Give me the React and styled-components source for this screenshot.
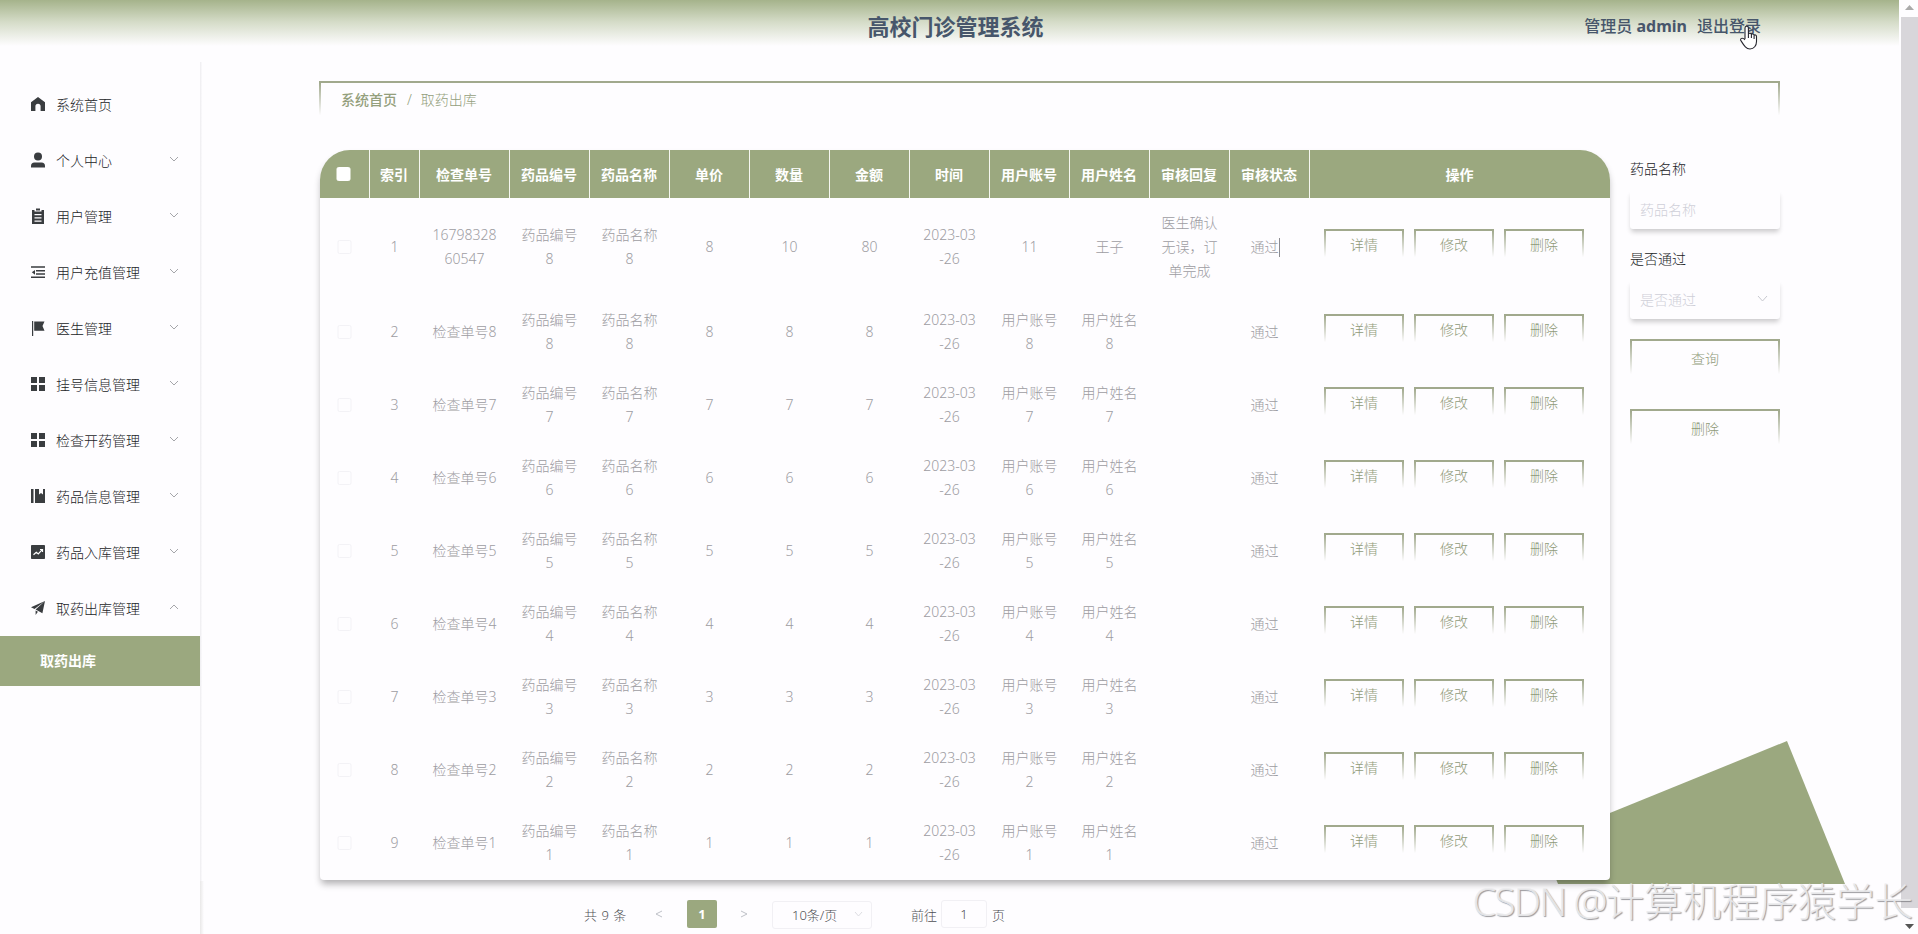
import React from 'react';
import styled, { createGlobalStyle, css } from 'styled-components';

const GREEN = '#9ba87f';
const PAGE = '#fefdff';

const GlobalStyle = createGlobalStyle`
  * {
    box-sizing: border-box;
  }
  html, body {
    margin: 0;
    height: 934px;
    overflow: hidden;
    background: ${PAGE};
  }
  body {
    font-family: 'Noto Sans', 'Noto Sans CJK SC', sans-serif;
    font-size: 14px;
    font-weight: 300;
    color: #222427;
  }
  button, input {
    font: inherit;
  }
`;

const fadingBorder = css`
  border: 2px solid ${GREEN};
  border-image: linear-gradient(to bottom, #a1a98d 5%, rgba(160, 171, 134, 0) 88%) 2;
`;

const Page = styled.div`
  position: relative;
  display: grid;
  grid-template-columns: 1fr 19px;
  width: 1918px;
  height: 934px;
  overflow: hidden;
`;

const Screen = styled.div`
  display: flex;
  flex-direction: column;
  min-width: 0;
`;

const Header = styled.header`
  display: grid;
  grid-template-columns: 1fr auto 1fr;
  align-items: center;
  height: 62px;
  padding: 0 138px 11px 150px;
  background: linear-gradient(to bottom, #a5b38b 0, #d5dcc8 22px, ${PAGE} 46px);
  color: #47566b;
  font-weight: 700;
`;

const Title = styled.h1`
  grid-column: 2;
  margin: 0;
  font-size: 22px;
  line-height: 30px;
`;

const Account = styled.div`
  display: flex;
  justify-content: flex-end;
  gap: 10px;
  font-size: 16px;
  font-weight: 500;
  line-height: 24px;
`;

const AccountName = styled.b`
  font-weight: 700;
`;

const Body = styled.div`
  display: flex;
  flex: 1;
  min-height: 0;
`;

const Sidebar = styled.nav`
  width: 200px;
  flex-shrink: 0;
  padding-top: 14px;
`;

const MenuItem = styled.div`
  display: flex;
  align-items: center;
  height: 56px;
  padding: 0 20px 0 31px;
`;

const MenuLabel = styled.span`
  flex: 1;
  margin-left: 11px;
`;

const MenuArrow = styled.svg`
  width: 10px;
  height: 6px;
  margin: 0 1px 3px 0;
  fill: none;
  stroke: #a5a6aa;
  transform: ${(props) => (props.$open ? 'rotate(180deg)' : 'none')};
`;

const SubItem = styled.div`
  height: 50px;
  padding-left: 40px;
  background: ${GREEN};
  color: #fff;
  font-weight: 700;
  line-height: 50px;
`;

// the menu shadow gets wider below the end of the scrolled content
const Divider = styled.div`
  display: flex;
  flex-direction: column;
  width: 4px;
  margin-right: -4px;

  &::before {
    content: '';
    height: 819px;
    background: linear-gradient(to right, #eeedf0, #f7f6f9 35%, ${PAGE} 60%);
  }
  &::after {
    content: '';
    flex: 1;
    background: linear-gradient(to right, #e9e8e8, ${PAGE});
  }
`;

const Main = styled.main`
  position: relative;
  flex: 1;
  padding: 19px 119px 0 119px;
`;

const Breadcrumb = styled.div`
  ${fadingBorder};
  display: flex;
  gap: 10px;
  height: 39px;
  padding: 0 20px 0 21px;
  color: #949f7c;
  line-height: 33px;
`;

const Crumb = styled.span`
  margin-left: -1px;
  font-weight: ${(props) => (props.$link ? 500 : 300)};
`;

const Decoration = styled.div`
  position: absolute;
  left: 1341px;
  top: 679px;
  width: 304px;
  height: 143px;
  background: ${GREEN};
  clip-path: polygon(246px 0, 304px 143px, 17px 143px, 0 100px);
`;

const Content = styled.div`
  position: relative;
  display: flex;
  align-items: flex-start;
  gap: 20px;
  padding: 30px 0 0 1px;
`;

const Card = styled.section`
  width: 1290px;
  height: 730px;
  border-radius: 30px 30px 4px 4px;
  background: ${PAGE};
  box-shadow: 0 5px 7px -1px rgba(0, 0, 0, 0.3);
  overflow: hidden;
`;

const Table = styled.table`
  width: 100%;
  border-collapse: separate;
  border-spacing: 0;
  table-layout: fixed;
`;

const HeadCell = styled.th`
  height: 48px;
  padding: 0 1px 1px 0;
  background: ${GREEN};
  border-right: 1px solid #f6f7f1;
  color: #fff;
  font-weight: 700;

  &:last-child {
    border-right: 0;
  }
`;

const Cell = styled.td`
  height: 73px;
  padding: 13px 11px 12px 10px;
  color: #9d9ca2;
  line-height: 24px;
  text-align: center;
  word-break: break-all;
  ${(props) =>
    props.$shifted &&
    css`
      padding-right: 21px;
      white-space: nowrap;
    `}
`;

const Checkbox = styled.span`
  display: block;
  width: 14px;
  height: 14px;
  margin: 0 auto;
  border: 1px solid ${(props) => (props.$head ? '#fff' : '#f3f2f6')};
  border-radius: 2px;
  background: ${(props) => (props.$head ? '#fff' : 'transparent')};
  transform: translateX(-0.5px);
`;

const Caret = styled.i`
  display: inline-block;
  width: 1px;
  height: 19px;
  margin-right: -1px;
  background: #8b8b90;
  vertical-align: -5px;
`;

const Actions = styled.div`
  display: flex;
  justify-content: center;
  gap: 10px;
  margin: -4px 0 0 -1px;
`;

const GhostButton = styled.button`
  ${fadingBorder};
  width: ${(props) => (props.$wide ? 150 : 80)}px;
  height: ${(props) => (props.$wide ? 40 : 32)}px;
  padding: 0;
  background: none;
  color: #8f9a78;
  line-height: 20px;
`;

const Search = styled.aside`
  display: flex;
  flex-direction: column;
  width: 150px;
`;

const Label = styled.label`
  height: 40px;
  line-height: 38px;
`;

const Field = styled.div`
  display: flex;
  align-items: center;
  justify-content: space-between;
  height: 39px;
  margin-bottom: ${(props) => props.$gap}px;
  padding: 0 12px 2px 10px;
  border-radius: 3px;
  color: #cfcfd8;
  background: ${PAGE};
  box-shadow: 0 4px 5px -1px rgba(0, 0, 0, 0.2);
`;

const SmallArrow = styled.svg`
  width: 11px;
  height: 7px;
  fill: none;
  stroke: ${(props) => (props.$faint ? '#dddde2' : '#c8c9d0')};
`;

const Spacer = styled.div`
  height: 30px;
`;

const Pagination = styled.div`
  position: relative;
  display: flex;
  align-items: center;
  height: 28px;
  margin-top: 20px;
  padding-left: 265px;
  color: #4e5054;
  font-size: 13px;
`;

const Total = styled.span`
  width: 63px;
  word-spacing: 1px;
`;

const PageArrow = styled.svg`
  width: 8px;
  height: 8px;
  margin: 0 24px 0 8px;
  fill: none;
  stroke: #bfc1c8;
`;

const CurrentPage = styled.span`
  width: 30px;
  margin-right: 15px;
  border-radius: 2px;
  background: ${GREEN};
  color: #fff;
  font-weight: 700;
  line-height: 28px;
  text-align: center;
`;

const SizeSelect = styled.span`
  display: flex;
  align-items: center;
  justify-content: space-between;
  width: 100px;
  height: 28px;
  margin: 1px 39px 0 0;
  padding: 0 7px 0 19px;
  border: 1px solid #f1f0f4;
  border-radius: 3px;
`;

const Jump = styled.span`
  width: 46px;
  height: 28px;
  margin: 0 5px 0 4px;
  border: 1px solid #f1f0f4;
  border-radius: 3px;
  line-height: 26px;
  text-align: center;
`;

const Scrollbar = styled.div`
  display: flex;
  flex-direction: column;
  align-items: center;
  padding-left: 2px;
  background: ${PAGE};
`;

const ScrollThumb = styled.div`
  width: 17px;
  height: 891px;
  background: #d8d6da;
`;

const ScrollArrow = styled.svg`
  width: 9px;
  height: 17px;
  overflow: visible;
  fill: ${(props) => props.$color};
`;

const Watermark = styled.div`
  position: absolute;
  right: 5px;
  top: 873px;
  color: rgba(236, 236, 238, 0.9);
  font-size: 38.4px;
  line-height: 56px;
  white-space: nowrap;
  text-shadow: 1px 1px 1px rgba(90, 90, 95, 0.6);
`;

const WatermarkSite = styled.span`
  letter-spacing: -1.8px;
`;

const Cursor = styled.svg`
  position: absolute;
  left: 1739px;
  top: 25px;
  width: 19px;
  height: 25px;
`;

const Icon = styled.svg`
  width: 14px;
  height: 14px;
  flex-shrink: 0;
  overflow: visible;
  fill: #3a3d40;
`;

const icons = {
  home: <path d="M7 0 0 5.300V14h4.400V9.300a2.600 2.600 0 0 1 5.200 0V14H14V5.300z" />,
  user: (
    <>
      <circle cx="7" cy="3.400" r="4" />
      <path d="M0 14.500V13a3.500 3.500 0 0 1 3.500-3.500h7A3.500 3.500 0 0 1 14 13v1.500z" />
    </>
  ),
  order: (
    <path
      fillRule="evenodd"
      d="M1 1h2.500v1.500h7V1H13v14H1zM5-.500h4v2H5zM3.500 5v1.200h7V5zm0 3.300v1.200h7V8.300zm0 3.200v1.200h7v-1.200z"
    />
  ),
  fold: (
    <path d="M0 1.200h14v1.600H0zM5 5h9v1.400H5zM5 8.300h9v1.400H5zM0 11.500h14v1.600H0zM4 5v4.700L.800 7.300z" />
  ),
  flag: <path d="M1 0h1.200v15H1zM3.200.500H13.500l-2 4.500 2 4.800H3.200z" />,
  grid: <path d="M0 0h6v6H0zM8 0h6v6H8zM0 8h6v6H0zM8 8h6v6H8z" />,
  book: <path d="M0 0h2.500v14H0zM4 0h4v5.500l2-1.500 2 1.500V0h2v14H4z" />,
  chart: (
    <>
      <rect width="14" height="14" rx=".8" />
      <path
        d="m2.500 9.800 2.800-2.600 2 1.700 3.900-4.200M9 4.500h2.500V7"
        fill="none"
        stroke="#fff"
        strokeWidth="1.200"
      />
    </>
  ),
  send: <path d="M14 0 0 6.200l3.500 1.900zM14 0 4.600 8.600l6.800 3.600zM4.600 9.600V14l2.300-3.200z" />,
};

const menu = [
  { icon: 'home', label: '系统首页', leaf: true },
  { icon: 'user', label: '个人中心' },
  { icon: 'order', label: '用户管理' },
  { icon: 'fold', label: '用户充值管理' },
  { icon: 'flag', label: '医生管理' },
  { icon: 'grid', label: '挂号信息管理' },
  { icon: 'grid', label: '检查开药管理' },
  { icon: 'book', label: '药品信息管理' },
  { icon: 'chart', label: '药品入库管理' },
  { icon: 'send', label: '取药出库管理', open: true },
];

const columns = [
  ['索引', 50],
  ['检查单号', 90],
  ['药品编号', 80],
  ['药品名称', 80],
  ['单价', 80],
  ['数量', 80],
  ['金额', 80],
  ['时间', 80],
  ['用户账号', 80],
  ['用户姓名', 80],
  ['审核回复', 80],
  ['审核状态', 80],
  ['操作', 300],
];

const rows = [
  ['1679832860547', '药品编号8', '药品名称8', 8, 10, 80, '2023-03-26', 11, '王子', '医生确认无误，订单完成'],
  ...[8, 7, 6, 5, 4, 3, 2, 1].map((n) => [
    `检查单号${n}`,
    `药品编号${n}`,
    `药品名称${n}`,
    n,
    n,
    n,
    '2023-03-26',
    `用户账号${n}`,
    `用户姓名${n}`,
    '',
  ]),
];

const SideMenu = () => (
  <Sidebar>
    {menu.map((item) => (
      <MenuItem key={item.label}>
        <Icon viewBox="0 0 14 14">{icons[item.icon]}</Icon>
        <MenuLabel>{item.label}</MenuLabel>
        {!item.leaf && (
          <MenuArrow viewBox="0 0 10 6" $open={item.open}>
            <path d="m1 1 4 4 4-4" />
          </MenuArrow>
        )}
      </MenuItem>
    ))}
    <SubItem>取药出库</SubItem>
  </Sidebar>
);

const RecordTable = () => (
  <Table>
    <colgroup>
      <col width="50" />
      {columns.map(([name, width]) => (
        <col key={name} width={width} />
      ))}
    </colgroup>
    <thead>
      <tr>
        <HeadCell>
          <Checkbox $head />
        </HeadCell>
        {columns.map(([name]) => (
          <HeadCell key={name}>{name}</HeadCell>
        ))}
      </tr>
    </thead>
    <tbody>
      {rows.map((row, index) => (
        <tr key={row[0]}>
          <Cell>
            <Checkbox />
          </Cell>
          <Cell>{index + 1}</Cell>
          {row.map((value, i) => (
            <Cell key={i}>
              {value === '2023-03-26' ? (
                <>
                  2023-03
                  <br />
                  -26
                </>
              ) : (
                value
              )}
            </Cell>
          ))}
          <Cell $shifted>
            通过
            {index === 0 && <Caret />}
          </Cell>
          <Cell $shifted>
            <Actions>
              <GhostButton>详情</GhostButton>
              <GhostButton>修改</GhostButton>
              <GhostButton>删除</GhostButton>
            </Actions>
          </Cell>
        </tr>
      ))}
    </tbody>
  </Table>
);

const SearchPanel = () => (
  <Search>
    <Label>药品名称</Label>
    <Field $gap={11}>药品名称</Field>
    <Label>是否通过</Label>
    <Field $gap={20}>
      是否通过
      <SmallArrow viewBox="0 0 11 7">
        <path d="m1 1 4.500 5L10 1" />
      </SmallArrow>
    </Field>
    <GhostButton $wide>查询</GhostButton>
    <Spacer />
    <GhostButton $wide>删除</GhostButton>
  </Search>
);

export default () => {
  return (
    <Page>
      <GlobalStyle />
      <Screen>
        <Header>
          <Title>高校门诊管理系统</Title>
          <Account>
            <span>
              管理员 <AccountName>admin</AccountName>
            </span>
            <span>退出登录</span>
          </Account>
        </Header>
        <Body>
          <SideMenu />
          <Divider />
          <Main>
            <Decoration />
            <Breadcrumb>
              <Crumb $link>系统首页</Crumb>
              <span>/</span>
              <Crumb>取药出库</Crumb>
            </Breadcrumb>
            <Content>
              <Card>
                <RecordTable />
              </Card>
              <SearchPanel />
            </Content>
            <Pagination>
              <Total>共 9 条</Total>
              <PageArrow viewBox="0 0 8 8">
                <path d="M7 1 1 4l6 3" />
              </PageArrow>
              <CurrentPage>1</CurrentPage>
              <PageArrow viewBox="0 0 8 8">
                <path d="m1 1 6 3-6 3" />
              </PageArrow>
              <SizeSelect>
                10条/页
                <SmallArrow viewBox="0 0 11 7" $faint>
                  <path d="m2 1 3.500 4L9 1" />
                </SmallArrow>
              </SizeSelect>
              前往
              <Jump>1</Jump>页
            </Pagination>
          </Main>
        </Body>
      </Screen>
      <Scrollbar>
        <ScrollArrow viewBox="0 0 9 17" $color="#aaa">
          <path d="M0 10h9L4.500 5z" />
        </ScrollArrow>
        <ScrollThumb />
        <ScrollArrow viewBox="0 0 9 17" $color="#555">
          <path d="M0 16h9l-4.500 5z" />
        </ScrollArrow>
      </Scrollbar>
      <Cursor viewBox="0 0 19 25">
        <path
          d="M6 14V3a1.700 1.700 0 0 1 3.400 0v6c.4-1.200 2.700-1 3 .5.600-1 2.500-.6 2.700.7.700-.7 2.400-.3 2.400 1.300v5c0 4-2.500 7.500-6.500 7.500-4.200 0-6-3.500-9.500-9 0-2 2.500-2.500 4.500 0M9.400 9v4M12.400 9.500V13M15.100 10.500V14"
          fill="#fff"
          stroke="#26262e"
          strokeWidth="1.100"
        />
      </Cursor>
      <Watermark>
        <WatermarkSite>CSDN @</WatermarkSite>计算机程序猿学长
      </Watermark>
    </Page>
  );
};
